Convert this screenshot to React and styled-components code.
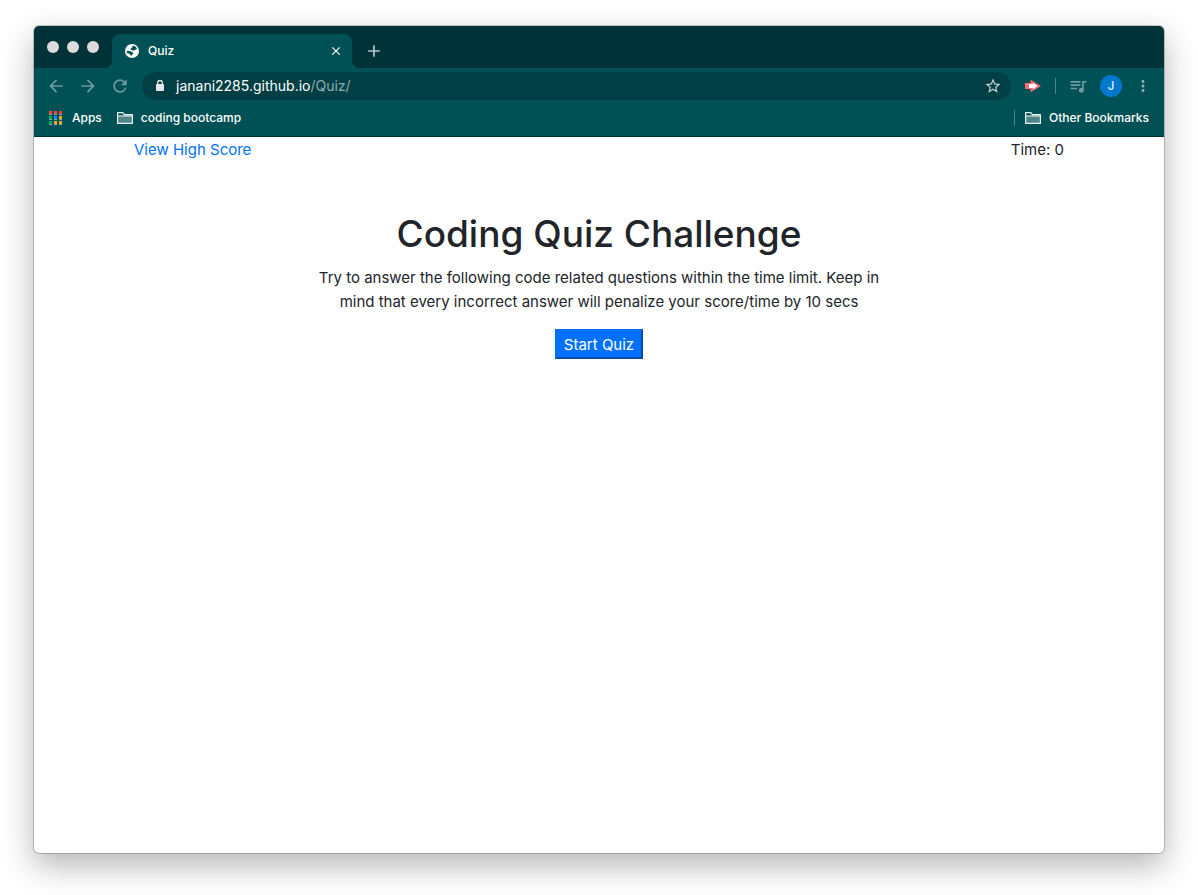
import React from "react";
import styled, { createGlobalStyle } from "styled-components";
import { MdStarBorder, MdArrowBack, MdArrowForward, MdRefresh, MdQueueMusic, MdMoreVert, MdClose, MdAdd } from "react-icons/md";

const Global = createGlobalStyle`
  *, *::before, *::after { box-sizing: border-box; }
  body {
    margin: 0;
    background: #fff;
    color: #212529;
    font: 400 15px/24px Inter, "Liberation Sans", sans-serif;
  }
  button, input { font: inherit; }
`;

const Desktop = styled.div`
  min-height: 100vh;
  display: flex;
  padding: 26px 34px 42px;
`;

const Window = styled.div`
  flex: 1;
  display: flex;
  flex-direction: column;
  min-width: 0;
  border-radius: 5px;
  overflow: hidden;
  background: #fff;
  box-shadow: 0 0 0 1px rgba(0, 0, 0, 0.2), 0 12px 32px rgba(0, 0, 0, 0.3);
`;

const TabStrip = styled.div`
  display: flex;
  align-items: flex-end;
  height: 42px;
  background: #003338;
  color: #fff;
`;

const Lights = styled.div`
  display: flex;
  align-self: center;
  gap: 8px;
  padding: 0 13px;
`;

const Light = styled.span`
  width: 12px;
  height: 12px;
  border-radius: 50%;
  background: #dcdcdc;
`;

const Tab = styled.div`
  position: relative;
  display: flex;
  align-items: center;
  width: 240px;
  height: 34px;
  padding: 0 8px 0 12px;
  border-radius: 8px 8px 0 0;
  background: #005155;
  font-size: 12px;
  font-weight: 500;
  line-height: 16px;

  &::before, &::after {
    content: "";
    position: absolute;
    bottom: 0;
    width: 8px;
    height: 8px;
  }
  &::before {
    right: 100%;
    background: radial-gradient(circle at 0 0, #003338 8px, #005155 8px);
  }
  &::after {
    left: 100%;
    background: radial-gradient(circle at 100% 0, #003338 8px, #005155 8px);
  }
`;

const TabTitle = styled.span`
  flex: 1;
  margin-left: 8px;
`;

const IconButton = styled.button`
  display: grid;
  place-items: center;
  flex: none;
  width: ${(p) => p.$size || 16}px;
  height: ${(p) => p.$size || 16}px;
  padding: 0;
  border: 0;
  background: none;
  color: ${(p) => p.$color || "#fff"};
  svg { display: block; }
`;

const NewTab = styled(IconButton)`
  margin: 0 0 7px 12px;
`;

const Toolbar = styled.div`
  display: flex;
  align-items: center;
  height: 36px;
  padding: 0 12px;
  background: #005155;
`;

const NavButtons = styled.div`
  display: flex;
  gap: 12px;
  margin-right: 12px;
`;

const AddressBar = styled.div`
  flex: 1;
  display: flex;
  align-items: center;
  height: 28px;
  padding: 0 9px 0 12px;
  border-radius: 14px;
  background: #004045;
  color: #e4e8e8;
`;

const Url = styled.div`
  flex: 1;
  margin-left: 10px;
  color: #fff;
  font-size: 14px;
  line-height: 20px;
  span { color: #8fabad; }
`;

const Divider = styled.span`
  width: 1px;
  height: 16px;
  background: #4d8588;
`;

const Actions = styled.div`
  display: flex;
  align-items: center;
  gap: 12px;
  margin-left: 12px;
`;

const Avatar = styled.button`
  width: 22px;
  height: 22px;
  padding: 0;
  border: 0;
  border-radius: 50%;
  background: #0079cc;
  color: #fff;
  font-size: 12px;
  line-height: 22px;
`;

const Bookmarks = styled.nav`
  display: flex;
  align-items: center;
  gap: 15px;
  height: 33px;
  padding: 0 15px 4px;
  border-bottom: 1px solid #003338;
  background: #005155;
`;

const Bookmark = styled.a`
  display: flex;
  align-items: center;
  gap: 8px;
  color: #fff;
  font-size: 12px;
  font-weight: 500;
  line-height: 16px;
  text-decoration: none;
`;

const OtherGroup = styled.div`
  display: flex;
  align-items: center;
  gap: 10px;
  margin-left: auto;
`;

const Page = styled.div`
  width: 100%;
  max-width: 960px;
  margin: 0 auto;
  padding: 1px 15px 0;
`;

const Header = styled.header`
  display: flex;
  justify-content: space-between;
  a { color: #0073f5; text-decoration: none; }
`;

const Intro = styled.main`
  max-width: 580px;
  margin: 48px auto 0;
  text-align: center;
  h1 {
    margin: 0 0 8px;
    font-size: 37px;
    font-weight: 500;
    line-height: 48px;
  }
  p { margin: 0 0 15px; }
`;

const StartButton = styled.button`
  display: block;
  margin: 0 auto;
  padding: 2px 7px 0;
  border: 2px outset #0070ff;
  background: #0070ff;
  color: #fff;
`;

const Globe = () => (
  <svg width="16" height="16" viewBox="0 0 16 16" aria-hidden="true">
    <circle cx="8" cy="8" r="7" fill="#fff" />
    <path d="M8.800 2.700C10.400 2.600 12.300 3.800 12.900 5.800c-.5.800-1.500.700-2.200 1.300-.7.700-1.900.700-2.600.200-.6-.4-1.700-.2-1.600-1.200.1-.9 1.200-.8 1.600-1.500.4-.7 0-1.400.7-1.900z" fill="#005155" />
    <path d="M2.400 8.300c1.600-.3 4.600-.3 5.300.6.4.6 1.800.5 1.800 1.400s-1.500.8-1.700 1.600c-.1.500 0 .9-.5 1-1-.1-.8-1.300-1.400-1.800-.8-.7-1.900-.4-2.600-1.100-.5-.5-.8-1.100-.9-1.700z" fill="#005155" />
  </svg>
);

const Padlock = () => (
  <svg width="12" height="14" viewBox="0 0 12 14" aria-hidden="true">
    <rect x="2" y="5" width="8" height="7" rx="1" fill="#e4e8e8" />
    <path d="M3.700 5.500V3.800a2.300 2.300 0 0 1 4.600 0v1.700" fill="none" stroke="#e4e8e8" strokeWidth="1.300" />
  </svg>
);

const Folder = () => (
  <svg width="16" height="14" viewBox="0 0 16 14" aria-hidden="true">
    <path d="M1 4.500h14V12H1z" fill="#4d8588" />
    <path d="M.6 12.400V1.600h5.200l1.600 2h8v8.800zM1 5h14" fill="none" stroke="#e8efef" strokeWidth="1.200" strokeLinejoin="round" />
  </svg>
);

const appColours = ["#ff4136", "#ff4136", "#ff4136", "#10a35a", "#1687f0", "#f7a823", "#10a35a", "#f7a823", "#f7a823"];

const AppsGrid = () => (
  <svg width="15" height="14" viewBox="0 0 15 14" aria-hidden="true">
    {appColours.map((c, i) => (
      <g key={i} transform={`translate(${(i % 3) * 5} ${Math.floor(i / 3) * 5})`}>
        <rect width="3" height="4" fill="#7fa8aa" />
        <rect width="3" height="3" fill={c} />
      </g>
    ))}
  </svg>
);

const PlayArrow = () => (
  <svg width="18" height="14" viewBox="0 0 18 14" aria-hidden="true">
    <path d="M1 4h5.500V.8L17 7 6.500 13.200V10H1z" fill="#ff6b6b" />
    <path d="M5 5h4V3.800L13.500 7 9 10.200V9H5z" fill="#fff" />
  </svg>
);

export default function App() {
  return (
    <>
      <Global />
      <Desktop>
        <Window>
          <TabStrip>
            <Lights><Light /><Light /><Light /></Lights>
            <Tab>
              <Globe />
              <TabTitle>Quiz</TabTitle>
              <IconButton aria-label="Close tab"><MdClose size={14} /></IconButton>
            </Tab>
            <NewTab aria-label="New tab" $size={20} $color="#b5c9ca"><MdAdd size={20} /></NewTab>
          </TabStrip>
          <Toolbar>
            <NavButtons>
              <IconButton aria-label="Back" $size={20} $color="#6d9b9e"><MdArrowBack size={20} /></IconButton>
              <IconButton aria-label="Forward" $size={20} $color="#6d9b9e"><MdArrowForward size={20} /></IconButton>
              <IconButton aria-label="Reload" $size={20} $color="#6d9b9e"><MdRefresh size={20} /></IconButton>
            </NavButtons>
            <AddressBar>
              <Padlock />
              <Url>janani2285.github.io<span>/Quiz/</span></Url>
              <IconButton aria-label="Bookmark this page" $size={18} $color="#c5d2d3"><MdStarBorder size={18} /></IconButton>
            </AddressBar>
            <Actions>
              <IconButton aria-label="Extension" $size={20}><PlayArrow /></IconButton>
              <Divider />
              <IconButton aria-label="Media" $size={20} $color="#6d9b9e"><MdQueueMusic size={20} /></IconButton>
              <Avatar>J</Avatar>
              <IconButton aria-label="Menu" $size={18} $color="#8fb0b2"><MdMoreVert size={18} /></IconButton>
            </Actions>
          </Toolbar>
          <Bookmarks>
            <Bookmark href="#apps"><AppsGrid />Apps</Bookmark>
            <Bookmark href="#coding"><Folder />coding bootcamp</Bookmark>
            <OtherGroup>
              <Divider />
              <Bookmark href="#other"><Folder />Other Bookmarks</Bookmark>
            </OtherGroup>
          </Bookmarks>
          <Page>
            <Header>
              <a href="#scores">View High Score</a>
              <span>Time: 0</span>
            </Header>
            <Intro>
              <h1>Coding Quiz Challenge</h1>
              <p>Try to answer the following code related questions within the time limit. Keep in mind that every incorrect answer will penalize your score/time by 10 secs</p>
              <StartButton>Start Quiz</StartButton>
            </Intro>
          </Page>
        </Window>
      </Desktop>
    </>
  );
}
